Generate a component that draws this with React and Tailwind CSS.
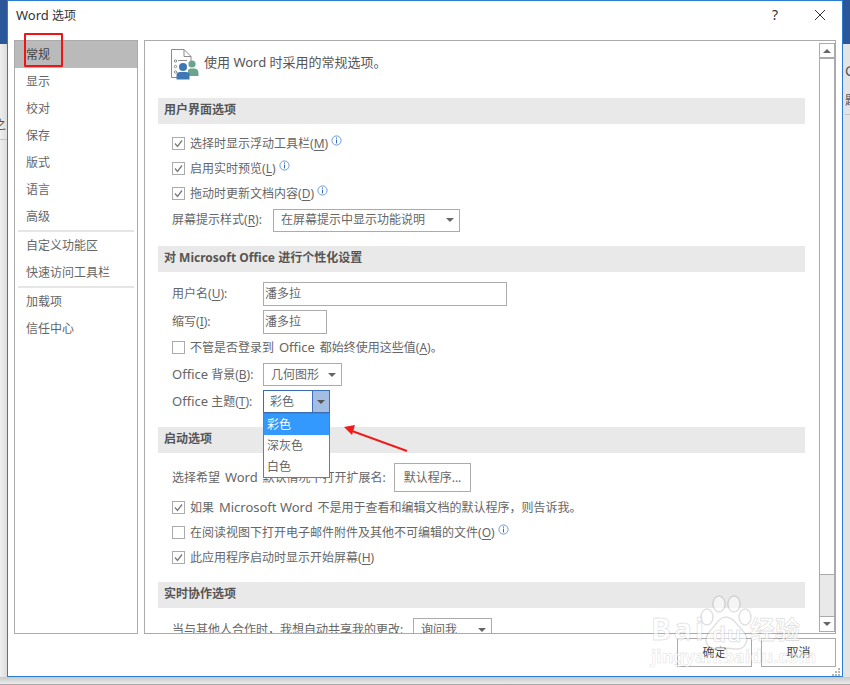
const FONT = "font-['Noto_Sans','Noto_Sans_CJK_SC',sans-serif]";

// latin runs sit a bit wider than the 12px CJK around them
function L({ children }) {
  return <span className="text-[13px] mx-[1.5px]">{children}</span>;
}

function Key({ k }) {
  return (
    <>
      (<span className="underline underline-offset-2">{k}</span>)
    </>
  );
}

function Info() {
  return (
    <svg width="11" height="11" viewBox="0 0 11 11" className="ml-[3px] mb-1.5 shrink-0">
      <circle cx="5.5" cy="5.5" r="4.6" fill="none" stroke="#6f9bd1" />
      <rect x="5" y="2.5" width="1" height="1.2" fill="#2b6cb5" />
      <rect x="5" y="4.6" width="1" height="3.8" fill="#2b6cb5" />
    </svg>
  );
}

function Check({ checked, children, info, className = "" }) {
  return (
    <div className={`flex items-center h-[25px] pl-[14px] ${className}`}>
      <span className="w-[13px] h-[13px] border border-[#ababab] bg-white flex items-center justify-center mr-[5px] shrink-0">
        {checked && (
          <svg width="11" height="11" viewBox="0 0 11 11">
            <path d="M2 5.5 L4.5 8.5 L9 2.5" fill="none" stroke="#7a7a7a" strokeWidth="1.3" />
          </svg>
        )}
      </span>
      <span className="whitespace-nowrap">{children}</span>
      {info && <Info />}
    </div>
  );
}

function SectionHead({ children, className = "" }) {
  return (
    <div className={`w-[647px] h-[26px] bg-[#e9e9e9] pl-[6px] pb-[2px] flex items-center font-bold text-[#555] whitespace-pre ${className}`}>
      {children}
    </div>
  );
}

function Select({ children, className = "" }) {
  return (
    <div className={`h-[23px] border border-[#ababab] bg-white flex items-center justify-between pl-[7px] pr-[5px] ${className}`}>
      <span className="whitespace-nowrap">{children}</span>
      <span className="w-0 h-0 border-x-[4px] border-x-transparent border-t-[4px] border-t-[#666]" />
    </div>
  );
}

function NavItem({ children, active }) {
  return (
    <div className={`h-[27px] flex items-center pl-[11px] ${active ? "bg-[#bababa] text-[#444]" : ""}`}>
      {children}
    </div>
  );
}

function Sep() {
  return <div className="h-[2px] bg-[#e6e6e6] mx-[3px]" />;
}

function GeneralIcon() {
  return (
    <svg width="28" height="31" viewBox="0 0 28 31" className="shrink-0">
      <path d="M9 28.5 H.5 V.5 H13 L20 7.5 V12 M13 .5 V7.5 H20" fill="none" stroke="#8c8c8c" />
      <circle cx="4.5" cy="12" r="1.2" fill="none" stroke="#8c8c8c" />
      <circle cx="4.5" cy="17.5" r="1.2" fill="none" stroke="#8c8c8c" />
      <circle cx="4.5" cy="23" r="1.2" fill="none" stroke="#8c8c8c" />
      <path d="M7 11.5 H16" stroke="#8c8c8c" />
      <circle cx="21" cy="15" r="3.6" fill="#6ba38d" />
      <path d="M17 27 V22 Q17 19.5 20 19.5 H23 Q27.5 19.5 27.5 24 V27 Z" fill="#6ba38d" />
      <circle cx="12" cy="18" r="4" fill="#3f78b5" />
      <path d="M5.5 30.5 V26 Q5.5 23 9 23 H15 Q18.5 23 18.5 26 V30.5 Z" fill="#3f78b5" />
    </svg>
  );
}

export default function App() {
  return (
    <div className={`${FONT} w-[850px] h-[685px] overflow-hidden bg-[#e6e6e6] relative text-[12px] text-[#666]`}>
      <div className="flex h-[677px]">
        {/* word window peeking out on both sides */}
        <div className="w-[7px] flex flex-col overflow-hidden">
          <div className="h-[44px] bg-[#2b579a] shrink-0" />
          <div className="flex-1 bg-gradient-to-r from-[#efefef] to-[#dcdcdc]">
            <div className="h-[72px]" />
            <div className="-ml-[6px] h-[23px] text-[#555] leading-[18px]">之</div>
            <div className="border-t border-[#c4c4c4]" />
          </div>
        </div>

        <div className="w-[836px] border border-[#2b7cd3] bg-white flex flex-col">
          <div className="h-[39px] flex items-start pl-[8px] pt-[5px] shrink-0">
            <span className="text-[#333] text-[12px] leading-[18px]">
              <span className="text-[13px]">Word</span> 选项
            </span>
            <span className="ml-auto text-[14px] leading-[18px] text-[#333]">?</span>
            <svg width="12" height="12" viewBox="0 0 12 12" className="ml-[36px] mr-[16px] mt-[3px]">
              <path d="M1 1 L11 11 M11 1 L1 11" stroke="#333" fill="none" />
            </svg>
          </div>

          <div className="flex h-[594px] pl-[6px] shrink-0">
            <nav className="w-[124px] border border-[#ababab] shrink-0">
              <NavItem active>常规</NavItem>
              <NavItem>显示</NavItem>
              <NavItem>校对</NavItem>
              <NavItem>保存</NavItem>
              <NavItem>版式</NavItem>
              <NavItem>语言</NavItem>
              <NavItem>高级</NavItem>
              <Sep />
              <NavItem>自定义功能区</NavItem>
              <NavItem>快速访问工具栏</NavItem>
              <Sep />
              <NavItem>加载项</NavItem>
              <NavItem>信任中心</NavItem>
            </nav>

            <div className="w-[692px] ml-[6px] border border-[#ababab] flex overflow-hidden">
              <main className="w-[674px] pl-[13px] shrink-0 overflow-hidden">
                <div className="flex items-start h-[57px] pl-[13px] pt-[8px]">
                  <GeneralIcon />
                  <span className="ml-[5px] mt-[4px] text-[13px] leading-[18px] text-[#555] whitespace-nowrap">
                    使用 Word 时采用的常规选项。
                  </span>
                </div>

                <SectionHead>用户界面选项</SectionHead>
                <div className="pt-[7px]">
                  <Check checked info>选择时显示浮动工具栏<Key k="M" /></Check>
                  <Check checked info>启用实时预览<Key k="L" /></Check>
                  <Check checked info>拖动时更新文档内容<Key k="D" /></Check>
                  <div className="flex items-center h-[26px] mt-px pl-[14px]">
                    <span className="w-[101px] whitespace-nowrap">屏幕提示样式<Key k="R" />:</span>
                    <Select className="w-[187px]">在屏幕提示中显示功能说明</Select>
                  </div>
                </div>

                <SectionHead className="mt-[13px]">对 Microsoft Office 进行个性化设置</SectionHead>
                <div className="pt-[8px] pl-[14px]">
                  <div className="flex items-center h-[28px]">
                    <span className="w-[91px]">用户名<Key k="U" />:</span>
                    <span className="w-[244px] h-[24px] border border-[#ababab] pl-[1px] leading-[22px]">潘多拉</span>
                  </div>
                  <div className="flex items-center h-[28px]">
                    <span className="w-[91px]">缩写<Key k="I" />:</span>
                    <span className="w-[64px] h-[24px] border border-[#ababab] pl-[1px] leading-[22px]">潘多拉</span>
                  </div>
                </div>
                <Check className="-mt-px">不管是否登录到<L> Office </L>都始终使用这些值<Key k="A" />。</Check>
                <div className="pl-[14px] pt-px">
                  <div className="flex items-center h-[27px]">
                    <span className="w-[91px] whitespace-nowrap"><span className="text-[13px]">Office</span> 背景<Key k="B" />:</span>
                    <Select className="w-[79px]">几何图形</Select>
                  </div>
                  <div className="flex items-center h-[27px]">
                    <span className="w-[91px] whitespace-nowrap"><span className="text-[13px]">Office</span> 主题<Key k="T" />:</span>
                    <div className="w-[67px] h-[23px] border border-[#3a6fb7] bg-white flex items-center justify-between pl-[6px]">
                      <span>彩色</span>
                      <span className="w-[17px] h-full bg-[#a3bde3] border-l border-[#3a6fb7] flex items-center justify-center">
                        <span className="w-0 h-0 border-x-[4px] border-x-transparent border-t-[4px] border-t-[#555]" />
                      </span>
                    </div>
                  </div>
                </div>

                <SectionHead className="mt-[12px]">启动选项</SectionHead>
                <div className="pt-[9px]">
                  <div className="flex items-center h-[31px] pl-[14px]">
                    <span className="w-[222px] whitespace-nowrap">选择希望<L> Word </L>默认情况下打开扩展名:</span>
                    <div className="w-[77px] h-[29px] border border-[#ababab] flex items-center justify-center">默认程序...</div>
                  </div>
                  <Check checked className="mt-[2px]">如果<L> Microsoft Word </L>不是用于查看和编辑文档的默认程序，则告诉我。</Check>
                  <Check info>在阅读视图下打开电子邮件附件及其他不可编辑的文件<Key k="O" /></Check>
                  <Check checked>此应用程序启动时显示开始屏幕<Key k="H" /></Check>
                </div>

                <SectionHead className="mt-[12px]">实时协作选项</SectionHead>
                <div className="flex items-start h-[24px] mt-[10px] pl-[14px]">
                  <span className="w-[241px] whitespace-nowrap leading-[23px]">当与其他人合作时，我想自动共享我的更改:</span>
                  <Select className="w-[79px]">询问我</Select>
                </div>
              </main>

              {/* scrollbar */}
              <div className="w-[16px] mt-[2px] mb-px border border-[#ababab] bg-[#e9e9e9] flex flex-col shrink-0">
                <div className="h-[15px] bg-white border-b-2 border-[#ababab] flex items-center justify-center shrink-0">
                  <span className="w-0 h-0 border-x-[4px] border-x-transparent border-b-[4px] border-b-[#666]" />
                </div>
                <div className="h-[516px] bg-white border-b border-[#ababab] shrink-0" />
                <div className="flex-1" />
                <div className="h-[15px] bg-white border-t border-[#ababab] flex items-center justify-center shrink-0">
                  <span className="w-0 h-0 border-x-[4px] border-x-transparent border-t-[4px] border-t-[#666]" />
                </div>
              </div>
            </div>
          </div>

          <div className="flex justify-end gap-[9px] pt-[4px] pr-[6px] text-[#444]">
            <div className="w-[75px] h-[29px] border border-[#ababab] flex items-center justify-center">确定</div>
            <div className="w-[75px] h-[29px] border border-[#ababab] flex items-center justify-center">取消</div>
          </div>
        </div>

        <div className="w-[7px] flex flex-col overflow-hidden text-[#555]">
          <div className="h-[44px] bg-[#2b579a] shrink-0" />
          <div className="flex-1 bg-[#e4e4e4] pl-[2px] text-[14px]">
            <div className="h-[18px] mt-[18px] leading-[18px]">C</div>
            <div className="h-[18px] mt-[8px] pt-[4px] leading-[18px] text-[12px]">题</div>
            <div className="border-t border-[#c4c4c4] mt-[8px]" />
          </div>
        </div>
      </div>

      <div className="h-[8px] bg-gradient-to-b from-[#c9c9c9] to-[#ececec] border-b border-[#a8a8a8]" />

      {/* open combo list */}
      <div className="absolute left-[263px] top-[413px] w-[67px] h-[65px] bg-white border border-[#7a7a7a] text-[#666]">
        <div className="h-[21px] bg-[#3399ff] text-white flex items-center pl-[3px]">彩色</div>
        <div className="h-[21px] flex items-center pl-[3px]">深灰色</div>
        <div className="h-[21px] flex items-center pl-[3px]">白色</div>
      </div>

      {/* annotations */}
      <div className="absolute left-[24px] top-[33px] w-[39px] h-[34px] border-2 border-[#f01414] rounded-[1px]" />
      <svg className="absolute left-[340px] top-[420px]" width="72" height="36" viewBox="0 0 72 36">
        <path d="M67 31 L12 11" stroke="#ee1c1c" strokeWidth="2" fill="none" />
        <path d="M4 7 L15 5 L12 15 Z" fill="#ee1c1c" />
      </svg>

      {/* resize grip */}
      <svg className="absolute left-[832px] top-[668px]" width="9" height="8" viewBox="0 0 9 8" fill="#b5b5b5">
        <rect x="6" y="0" width="2" height="2" />
        <rect x="3" y="3" width="2" height="2" />
        <rect x="6" y="3" width="2" height="2" />
        <rect x="0" y="6" width="2" height="2" />
        <rect x="3" y="6" width="2" height="2" />
        <rect x="6" y="6" width="2" height="2" />
      </svg>

      {/* baidu watermark */}
      <svg className="absolute left-[695px] top-[592px] pointer-events-none" width="64" height="64" viewBox="0 0 64 64" fill="rgba(255,255,255,.55)" stroke="rgba(0,0,0,.12)" strokeWidth="1.5">
        <ellipse cx="24" cy="12" rx="6" ry="8" />
        <ellipse cx="39" cy="12" rx="6" ry="8" />
        <ellipse cx="12" cy="25" rx="6" ry="8" />
        <ellipse cx="50" cy="25" rx="6" ry="8" />
        <path d="M31 25 C38 25 42 33 48 39 C56 48 50 58 40 57 C34 56 28 56 22 57 C12 58 7 48 15 39 C21 33 24 25 31 25 Z" />
      </svg>
      <div className="absolute left-[651px] top-[609px] text-white/60 font-bold text-[30px] tracking-[3px] leading-[40px] [-webkit-text-stroke:1px_rgba(0,0,0,0.12)] pointer-events-none">Bai</div>
      <div className="absolute left-[712px] top-[618px] text-white/60 font-bold text-[22px] tracking-[1px] leading-[30px] [-webkit-text-stroke:1px_rgba(0,0,0,0.12)] pointer-events-none">du</div>
      <div className="absolute left-[750px] top-[614px] text-white/60 font-bold text-[25px] leading-[30px] [-webkit-text-stroke:1px_rgba(0,0,0,0.12)] pointer-events-none">经验</div>
      <div className="absolute left-[651px] top-[645px] text-white/60 font-bold text-[18px] leading-[22px] [-webkit-text-stroke:1px_rgba(0,0,0,0.1)] pointer-events-none">jingyan.baidu.com</div>
    </div>
  );
}
